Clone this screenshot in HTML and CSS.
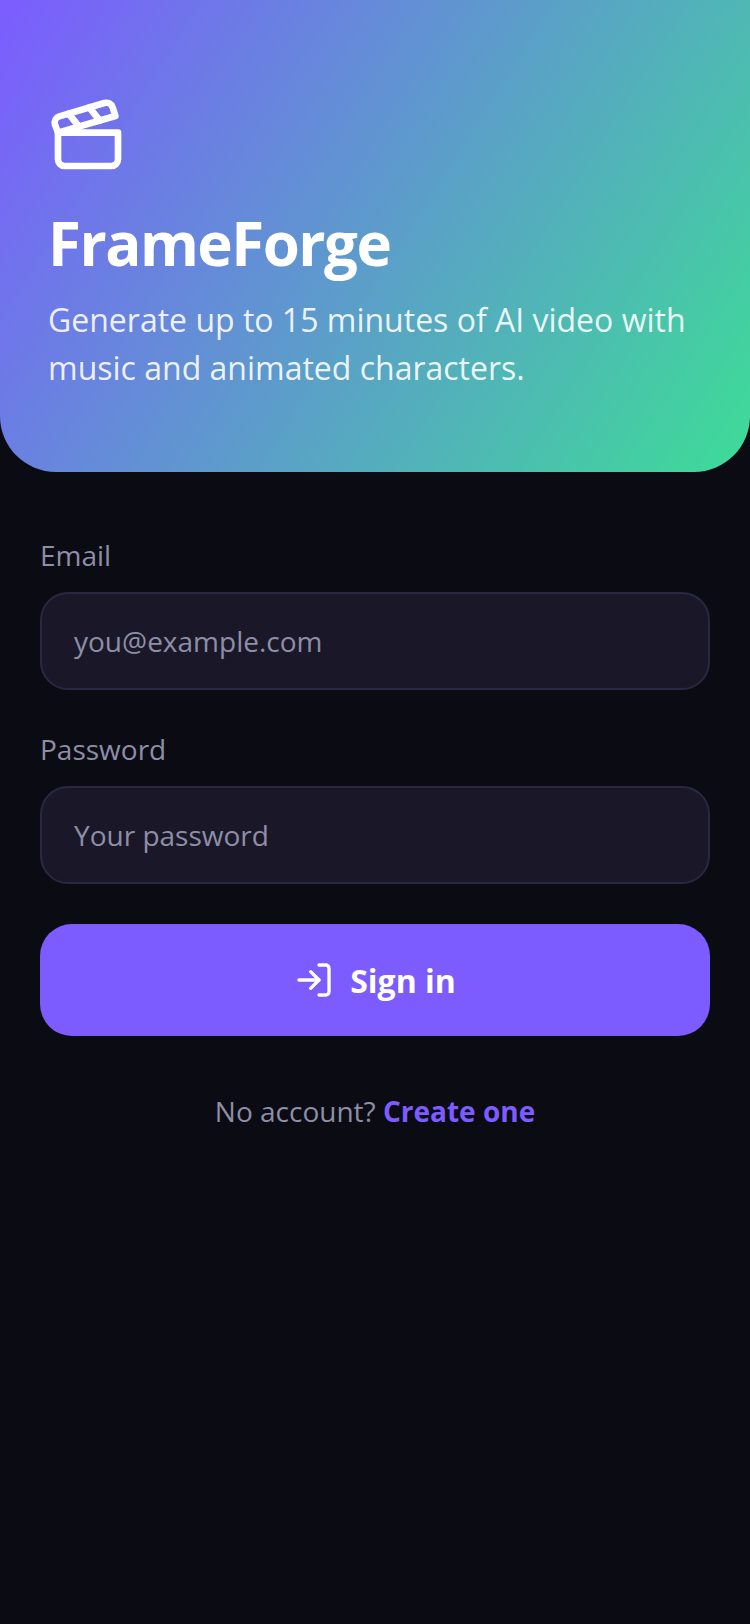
FILE: index.html
```html
<!DOCTYPE html>
<html lang="en">
<head>
  <meta charset="UTF-8">
  <title>FrameForge</title>
  <link rel="stylesheet" href="styles.css">
</head>
<body>
  <div class="hero">
    <svg class="hero-icon" viewBox="0 0 24 24" fill="none" stroke="#fff" stroke-width="2" stroke-linecap="round" stroke-linejoin="round">
      <path d="M20.2 6 3 11l-.9-2.4c-.3-1.1.3-2.2 1.3-2.5l13.5-4c1.1-.3 2.2.3 2.5 1.3Z"/>
      <path d="m6.2 5.3 3.1 3.9"/>
      <path d="m12.4 3.4 3.1 4"/>
      <path d="M3 11h18v8a2 2 0 0 1-2 2H5a2 2 0 0 1-2-2Z"/>
    </svg>
    <h1>FrameForge</h1>
    <p>Generate up to 15 minutes of AI video with music and animated characters.</p>
  </div>

  <form class="form">
    <label class="field">
      <span class="field-label">Email</span>
      <input class="field-input" type="text" placeholder="you@example.com">
    </label>
    <label class="field">
      <span class="field-label">Password</span>
      <input class="field-input" type="password" placeholder="Your password">
    </label>
    <button class="submit" type="button">
      <svg class="submit-icon" viewBox="0 0 24 24" fill="none" stroke="#fff" stroke-width="2" stroke-linecap="round" stroke-linejoin="round">
        <path d="M15 3h4a2 2 0 0 1 2 2v14a2 2 0 0 1-2 2h-4"/>
        <polyline points="10 17 15 12 10 7"/>
        <line x1="15" y1="12" x2="3" y2="12"/>
      </svg>
      Sign in
    </button>
    <p class="switch">No account? <a href="#">Create one</a></p>
  </form>
</body>
</html>
```

FILE: styles.css
```css
body {
  margin: 0;
  min-height: 1624px;
  background: #0b0b14;
  font-family: "Open Sans", sans-serif;
  color: #fff;
}

.hero {
  box-sizing: border-box;
  height: 472px;
  padding: 96px 48px 0;
  background: linear-gradient(122.2deg, #7c5cff 0%, #3ddc97 100%);
  border-radius: 0 0 56px 56px;
}

.hero-icon {
  display: block;
  width: 80px;
  height: 80px;
}

.hero h1 {
  margin: 27px 0 13px;
  font-size: 60px;
  line-height: 80px;
  font-weight: 700;
  letter-spacing: -1.5px;
}

.hero p {
  margin: 0;
  font-size: 32px;
  line-height: 48px;
  color: rgba(255, 255, 255, 0.9);
}

.form {
  display: flex;
  flex-direction: column;
  padding: 64px 40px 0;
}

.field {
  display: block;
  margin-bottom: 40px;
}

.field-label {
  display: block;
  margin-bottom: 18px;
  font-size: 28px;
  line-height: 38px;
  color: #8e8ea6;
}

.field-input {
  display: block;
  box-sizing: border-box;
  width: 100%;
  height: 98px;
  padding: 0 32px;
  background: #1a1828;
  border: 2px solid #2a2840;
  border-radius: 28px;
  font-family: inherit;
  font-size: 28px;
  color: #fff;
  outline: none;
}

.field-input::placeholder {
  color: #8e8ea6;
  opacity: 1;
}

.submit {
  display: flex;
  align-items: center;
  justify-content: center;
  gap: 16px;
  height: 112px;
  background: #7c5cff;
  border: none;
  border-radius: 32px;
  font-family: inherit;
  font-size: 32px;
  font-weight: 700;
  color: #fff;
}

.submit-icon {
  width: 40px;
  height: 40px;
}

.switch {
  margin: 56px 0 0;
  text-align: center;
  font-size: 28px;
  line-height: 38px;
  color: #8e8ea6;
}

.switch a {
  color: #7c5cff;
  font-weight: 700;
  text-decoration: none;
}
```
